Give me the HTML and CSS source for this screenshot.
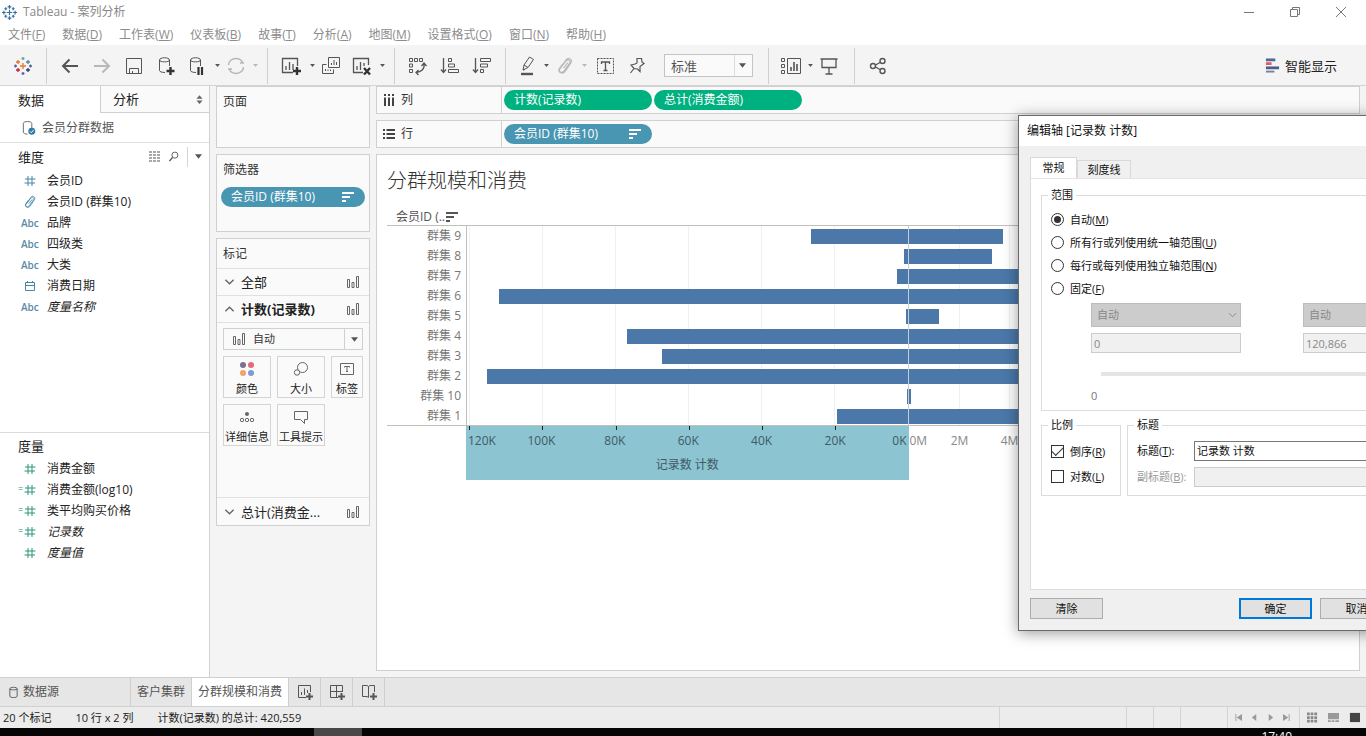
FILE: index.html
```html
<!DOCTYPE html>
<html lang="zh-CN">
<head>
<meta charset="utf-8">
<title>Tableau - 案列分析</title>
<link rel="stylesheet" href="styles.css">
</head>
<body>
<svg class="defs" aria-hidden="true">
  <symbol id="hash" viewBox="0 0 12 12"><path d="M4 1v10M8 1v10M1 4h10.500M.5 8H11"/></symbol>
  <symbol id="clip" viewBox="0 0 14 16"><path d="M3.500 9 8 3.500c2-2 4.500 0 3 2.200L6 12.500c-2 2.300-5 .5-3.500-2L8 2.500c2-2.500 6-.5 4.200 2.700L7 13c-2 2.500-6.500 1-5.200-2.500L5 6M5.500 10l4-5"/></symbol>
  <symbol id="sort" viewBox="0 0 12 12"><path d="M0 2h12M0 6h8M0 10h4" stroke-width="2"/></symbol>
  <symbol id="bars" viewBox="0 0 14 14"><path d="M1.500 4.500h2v8h-2zM6 7.500h2v5H6zM10.500 1.500h2v11h-2z"/></symbol>
  <symbol id="caret" viewBox="0 0 8 5"><path d="M0 0h8L4 5z" fill="currentColor" stroke="none"/></symbol>
  <symbol id="down" viewBox="0 0 12 8"><path d="m1.500 1.500 4.500 4.500 4.500-4.500" stroke-width="1.500"/></symbol>
  <symbol id="up" viewBox="0 0 12 8"><path d="m1.500 6.500 4.500-4.500 4.500 4.500" stroke-width="1.500"/></symbol>
  <symbol id="cyl" viewBox="0 0 20 20"><path d="M9 16.500c-3.500 0-5.500-1-5.500-2V4c0-3 10-3 10 0v6M3.500 4c0 2.500 10 2.500 10 0"/></symbol>
</svg>

<header class="titlebar">
  <svg class="applogo" viewBox="0 0 16 16"><g stroke="#38709c" stroke-width="1.300"><path d="M8 5v6M5 8h6M8 0v4M6 2h4M8 12v4M6 14h4M2 6v4M0 8h4M14 6v4M12 8h4M4 2.500v3M2.500 4h3M12 2.500v3M10.500 4h3M4 10.500v3M2.500 12h3M12 10.500v3M10.500 12h3"/></g></svg>
  <h1>Tableau - 案列分析</h1>
  <div class="winbtns">
    <button aria-label="最小化"><svg viewBox="0 0 12 12"><path d="M1 6.500h10"/></svg></button>
    <button aria-label="还原"><svg viewBox="0 0 12 12"><path d="M1.500 3.500h7v7h-7zM3.500 3.500v-2h7v7h-2"/></svg></button>
    <button aria-label="关闭"><svg viewBox="0 0 12 12"><path d="m1 1 10 10M11 1 1 11"/></svg></button>
  </div>
</header>
<nav class="menubar">
  <a href="#">文件(<u>F</u>)</a><a href="#">数据(<u>D</u>)</a><a href="#">工作表(<u>W</u>)</a><a href="#">仪表板(<u>B</u>)</a><a href="#">故事(<u>T</u>)</a><a href="#">分析(<u>A</u>)</a><a href="#">地图(<u>M</u>)</a><a href="#">设置格式(<u>O</u>)</a><a href="#">窗口(<u>N</u>)</a><a href="#">帮助(<u>H</u>)</a>
</nav>

<div class="toolbar">
  <button class="tb home" aria-label="开始"><svg viewBox="0 0 20 20"><g stroke-width="1.300"><path stroke="#e8762c" d="M10 7v6M7 10h6M5 4v4M3 6h4"/><path stroke="#c72037" d="M5 12v4M3 14h4"/><path stroke="#59879b" d="M15 4v4M13 6h4"/><path stroke="#1f457e" d="M15 12v4M13 14h4"/><path stroke="#7199a6" d="M10 1v3M8.500 2.500h3"/><path stroke="#5b6591" d="M10 16v3M8.500 17.500h3M17.500 8.500v3M16 10h3M2.500 8.500v3M1 10h3"/></g></svg></button>
  <i class="sep"></i>
  <button class="tb" aria-label="撤销"><svg viewBox="0 0 20 20"><path stroke-width="2" d="M18 10H3M9.500 3.500 3 10l6.500 6.500"/></svg></button>
  <button class="tb off" aria-label="重做"><svg viewBox="0 0 20 20"><path stroke-width="2" d="M2 10h15M10.500 3.500 17 10l-6.500 6.500"/></svg></button>
  <button class="tb" aria-label="保存"><svg viewBox="0 0 20 20"><path d="M2.500 2.500h15v15h-15zM5.500 17v-4.500h9V17M8.500 17v-2"/></svg></button>
  <button class="tb" aria-label="新建数据源"><svg viewBox="0 0 20 20"><use href="#cyl"/><path stroke="#333" stroke-width="2.400" d="M14.500 11v8M10.500 15h8"/></svg></button>
  <button class="tb s30" aria-label="暂停自动更新"><svg viewBox="0 0 20 20"><use href="#cyl"/><path stroke="#333" stroke-width="2.200" d="M11.500 11v8M15 11v8"/></svg></button>
  <button class="drop" aria-label="更多"><svg><use href="#caret"/></svg></button>
  <button class="tb s28 off" aria-label="刷新"><svg viewBox="0 0 20 20"><path stroke-width="1.500" d="M2.500 9c0-3.500 3-6.500 7.500-6.500 3 0 5.500 1.500 6.700 4.200M17.500 11c0 3.500-3 6.500-7.500 6.500-3 0-5.500-1.500-6.700-4.200M14 7h4M2 13h4"/></svg></button>
  <button class="drop off" aria-label="更多"><svg><use href="#caret"/></svg></button>
  <i class="sep"></i>
  <button class="tb" aria-label="新建工作表"><svg viewBox="0 0 20 20"><path d="M12 16.500H1.500v-14h15V10M5 14v-4M8.500 14V6M12 14V8" stroke-width="1.300"/><path stroke="#333" stroke-width="2.400" d="M16 11v8M12 15h8"/></svg></button>
  <button class="drop" aria-label="更多"><svg><use href="#caret"/></svg></button>
  <button class="tb s28" aria-label="复制"><svg viewBox="0 0 20 20"><path d="M7.500 1.500h11v10h-11zM5.500 8.500h-4v9h11v-4M10.500 9V7M13 9V4M15.500 9V6M4.500 15v-2M7 15v-1.500M9.500 15v-1.500"/></svg></button>
  <button class="tb" aria-label="清除工作表"><svg viewBox="0 0 20 20"><path d="M12 16.500H2.500v-14h15V9M6 14v-4M9.500 14V6M13 10V7" stroke-width="1.300"/><path stroke="#333" stroke-width="2.400" d="m13 12 6 6.500M19 12l-6 6.500"/></svg></button>
  <button class="drop" aria-label="更多"><svg><use href="#caret"/></svg></button>
  <i class="sep"></i>
  <button class="tb" aria-label="交换行和列"><svg viewBox="0 0 20 20"><path d="M1.500 2.500h3v3h-3zM6.500 2.500h3v3h-3zM11.500 2.500h3v3h-3zM1.500 8h3v3h-3zM1.500 13.500h3v3h-3z"/><path stroke-width="1.300" d="M16 8c1 5-3 8-8 8.500M13.500 10 16 7l2.500 3M10.500 14 8 16.500l2.500 2.500"/></svg></button>
  <button class="tb" aria-label="升序"><svg viewBox="0 0 20 20"><path d="M3.500 2v14M1 13.500l2.500 3 2.500-3" stroke-width="1.300"/><path d="M8.500 2.500h3v3h-3zM8.500 8h6v3h-6zM8.500 13.500h10v3h-10z"/></svg></button>
  <button class="tb" aria-label="降序"><svg viewBox="0 0 20 20"><path d="M3.500 2v14M1 13.500l2.500 3 2.500-3" stroke-width="1.300"/><path d="M8.500 2.500h10v3h-10zM8.500 8h7v3h-7zM8.500 13.500h3v3h-3z"/></svg></button>
  <i class="sep"></i>
  <button class="tb s28" aria-label="突出显示"><svg viewBox="0 0 20 20"><path d="m6 14 1-5 5.500-8 4 2.500-5.500 8zM7 9l4 2.500M6 14l2-.500"/><path stroke-width="2.400" d="M4 18h12"/></svg></button>
  <button class="drop" aria-label="更多"><svg><use href="#caret"/></svg></button>
  <button class="tb s28 off" aria-label="分组成员"><svg class="mid"><use href="#clip"/></svg></button>
  <button class="drop off" aria-label="更多"><svg><use href="#caret"/></svg></button>
  <button class="tb" aria-label="显示标记标签"><svg viewBox="0 0 20 20"><path stroke-dasharray="2 1" d="M2.500 2.500h16v15h-16z"/><path stroke-width="1.300" d="M6.500 8V6h8v2M10.500 6v8.500M8.500 14.500h4"/></svg></button>
  <button class="tb" aria-label="固定轴"><svg viewBox="0 0 20 20"><path stroke-width="1.200" d="M10 2.500h4.500l.5 3.500 2 1.500-4 3v5L10.500 13 7 12.500 4 9l4-1 2-1zM7 12.500 3.500 17"/></svg></button>
  <label class="fit"><select aria-label="适合"><option>标准</option></select><svg><use href="#caret"/></svg></label>
  <i class="sep wide"></i>
  <button class="tb s28" aria-label="显示卡"><svg viewBox="0 0 20 20"><path d="M.5 2.500h3v3h-3zM.5 8.500h3v3h-3zM.5 14.500h3v3h-3zM6.500 2.500h13v15h-13z"/><path stroke-width="1.600" d="M10 15v-4M13 15V6M16 15V8"/></svg></button>
  <button class="drop" aria-label="更多"><svg><use href="#caret"/></svg></button>
  <button class="tb s28" aria-label="演示模式"><svg viewBox="0 0 20 20"><path stroke-width="1.300" d="M1.500 3h17M3 3v8.500h14V3M10 11.500V18M6.500 18h7"/></svg></button>
  <i class="sep share"></i>
  <button class="tb" aria-label="共享"><svg viewBox="0 0 20 20"><g stroke-width="1.400"><circle cx="5" cy="10" r="2.500"/><circle cx="14.500" cy="5" r="2.500"/><circle cx="14.500" cy="15" r="2.500"/><path d="m7.500 9 4.500-2.500M7.500 11l4.500 2.500"/></g></svg></button>
  <button class="showme"><svg viewBox="0 0 16 16"><path stroke="#4e6a9c" stroke-width="3" d="M1 2h10"/><path stroke="#e35b5b" stroke-width="3" d="M1 6h6"/><path stroke="#4b5f8c" stroke-width="3" d="M1 10.500h14"/><path stroke="#7a7f9c" stroke-width="2" d="M1 14.500h9"/></svg>智能显示</button>
</div>

<main class="work">
  <aside class="data">
    <div class="datatabs"><button class="on">数据</button><button>分析<svg viewBox="0 0 8 10"><path fill="#666" stroke="none" d="m4 0 3.500 4h-7zM.5 6h7L4 10z"/></svg></button></div>
    <a class="source" href="#"><svg viewBox="0 0 16 16"><path stroke="#666" d="M7 14.500c-3 0-4.500-1-4.500-2V3c0-2.500 9-2.500 9 0v5"/><circle cx="11.500" cy="11.500" r="3.700" fill="#2f7cab" stroke="none"/><path stroke="#fff" d="m9.500 11.500 1.500 1.500 2.500-3"/></svg>会员分群数据</a>
    <section class="fields dims">
      <h2>维度<span class="tools"><svg viewBox="0 0 12 10"><path stroke="#555" stroke-dasharray="3 1" d="M0 .5h12M0 3.500h12M0 6.500h12M0 9.500h12"/></svg><svg viewBox="0 0 12 12"><circle cx="7" cy="4.500" r="3.300" stroke="#555"/><path stroke="#555" stroke-width="1.500" d="M4.500 7 1 11"/></svg><i></i><svg class="car"><use href="#caret"/></svg></span></h2>
      <ul>
        <li><svg><use href="#hash"/></svg>会员ID</li>
        <li><svg class="pin"><use href="#clip"/></svg>会员ID (群集10)</li>
        <li><b>Abc</b>品牌</li>
        <li><b>Abc</b>四级类</li>
        <li><b>Abc</b>大类</li>
        <li><svg viewBox="0 0 12 12"><path d="M1.500 2.500h9v8h-9zM1.500 5.500h9M3.500 1v1.500M8.500 1v1.500"/></svg>消费日期</li>
        <li><b>Abc</b><em>度量名称</em></li>
      </ul>
    </section>
    <section class="fields meas">
      <h2>度量</h2>
      <ul>
        <li><svg><use href="#hash"/></svg>消费金额</li>
        <li class="calc"><svg><use href="#hash"/></svg>消费金额(log10)</li>
        <li class="calc"><svg><use href="#hash"/></svg>类平均购买价格</li>
        <li class="calc"><svg><use href="#hash"/></svg><em>记录数</em></li>
        <li><svg><use href="#hash"/></svg><em>度量值</em></li>
      </ul>
    </section>
  </aside>

  <div class="cards">
    <section class="card pages"><h2>页面</h2></section>
    <section class="card filters"><h2>筛选器</h2><button class="pill blue">会员ID (群集10)<svg><use href="#sort"/></svg></button></section>
    <section class="card marks">
      <h2>标记</h2>
      <button class="mrow"><svg class="chev"><use href="#down"/></svg>全部<svg class="bi"><use href="#bars"/></svg></button>
      <button class="mrow cur"><svg class="chev"><use href="#up"/></svg>计数(记录数)<svg class="bi"><use href="#bars"/></svg></button>
      <div class="mbody">
        <label class="mtype"><svg class="bi"><use href="#bars"/></svg><select aria-label="标记类型"><option>自动</option></select><span><svg class="car"><use href="#caret"/></svg></span></label>
        <div class="mgrid">
          <button><svg viewBox="0 0 16 16"><g stroke="none"><circle cx="4" cy="4" r="3" fill="#77738f"/><circle cx="12" cy="4" r="3" fill="#e5687f"/><circle cx="4" cy="12" r="3" fill="#eda36f"/><circle cx="12" cy="12" r="3" fill="#7d9bd0"/></g></svg>颜色</button>
          <button><svg viewBox="0 0 16 16"><circle cx="9.500" cy="6.500" r="5"/><circle cx="4" cy="11.500" r="2.700" fill="#fafafa"/></svg>大小</button>
          <button><svg viewBox="0 0 16 16"><path d="M1.500 2.500h13v11h-13zM5.500 6.500V5.500h5v1M8 5.500v5M7 10.500h2"/></svg>标签</button>
          <button><svg viewBox="0 0 16 16"><circle cx="8" cy="5" r="2" fill="#666" stroke="none"/><circle cx="3" cy="11" r="1.700"/><circle cx="8" cy="11" r="1.700"/><circle cx="13" cy="11" r="1.700"/></svg>详细信息</button>
          <button><svg viewBox="0 0 16 16"><path d="M1.500 2.500h13v8h-3v4l-4-4h-6z"/></svg>工具提示</button>
        </div>
      </div>
      <button class="mrow last"><svg class="chev"><use href="#down"/></svg>总计(消费金...<svg class="bi"><use href="#bars"/></svg></button>
    </section>
  </div>

  <div class="sheet">
    <div class="shelf"><h2><svg viewBox="0 0 12 12"><path stroke="#444" stroke-width="2" d="M2 0v2M6 0v2M10 0v2M2 3.500V12M6 3.500V12M10 3.500V12"/></svg>列</h2><button class="pill green">计数(记录数)</button><button class="pill green">总计(消费金额)</button></div>
    <div class="shelf"><h2><svg viewBox="0 0 12 12"><path stroke="#444" stroke-width="2" d="M0 2h2M0 6h2M0 10h2M3.500 2H12M3.500 6H12M3.500 10H12"/></svg>行</h2><button class="pill blue">会员ID (群集10)<svg><use href="#sort"/></svg></button></div>
    <section class="view">
      <h2>分群规模和消费</h2>
      <div class="chart">
        <div class="rowhead">会员ID (..<svg><use href="#sort"/></svg></div>
        <div class="labels"><span>群集 9</span><span>群集 8</span><span>群集 7</span><span>群集 6</span><span>群集 5</span><span>群集 4</span><span>群集 3</span><span>群集 2</span><span>群集 10</span><span>群集 1</span></div>
        <div class="pane left">
          <div class="lines"><i></i><i></i><i></i><i></i><i></i><i></i></div>
          <div class="bar" style="width:21.9%"></div><div class="bar" style="width:.8%"></div><div class="bar" style="width:2.500%"></div><div class="bar" style="width:92.700%"></div><div class="bar" style="width:.3%"></div><div class="bar" style="width:63.600%"></div><div class="bar" style="width:55.700%"></div><div class="bar" style="width:95.400%"></div><div class="bar" style="width:.01%"></div><div class="bar" style="width:15.900%"></div>
        </div>
        <div class="pane right">
          <div class="lines"><i></i><i></i><i></i><i></i><i></i><i></i><i></i><i></i><i></i></div>
          <div class="bar" style="width:21.300%"></div><div class="bar" style="width:18.900%"></div><div class="bar" style="width:60%"></div><div class="bar" style="width:85%"></div><div class="bar" style="width:6.800%"></div><div class="bar" style="width:80%"></div><div class="bar" style="width:76%"></div><div class="bar" style="width:95%"></div><div class="bar" style="width:.5%"></div><div class="bar" style="width:50%"></div>
        </div>
        <div class="axis left picked">
          <div class="lines"><i></i><i></i><i></i><i></i><i></i><i></i></div>
          <div class="ticks"><span>120K</span><span>100K</span><span>80K</span><span>60K</span><span>40K</span><span>20K</span><span>0K</span></div>
          <div class="axname">记录数 计数</div>
        </div>
        <div class="axis right"><div class="ticks"><span>0M</span><span>2M</span><span>4M</span></div></div>
      </div>
    </section>
  </div>
</main>

<div class="sheettabs">
  <button class="src"><svg viewBox="0 0 12 14"><path d="M2 3v8c0 2 8 2 8 0V3c0-2.200-8-2.200-8 0zc0 1.500 8 1.500 8 0"/></svg>数据源</button>
  <button>客户集群</button>
  <button class="on">分群规模和消费</button>
  <button class="new" aria-label="新建工作表"><svg viewBox="0 0 18 18"><path d="M10 14.500H2.500v-12h12V9M5.500 12V9M8.500 12V5.500M11.500 10V7"/><path stroke-width="2" d="M13.500 10v7M10 13.500h7"/></svg></button>
  <button class="new" aria-label="新建仪表板"><svg viewBox="0 0 18 18"><path d="M10 14.500H2.500v-12h12V9M2.500 8.500h12M8.500 2.500v12"/><path stroke-width="2" d="M13.500 10v7M10 13.500h7"/></svg></button>
  <button class="new" aria-label="新建故事"><svg viewBox="0 0 18 18"><path d="M8.500 14.500 7 13.500H2.500v-11H7l1.500 1 1.500-1h4.500V9M8.500 3.500v11"/><path stroke-width="2" d="M13.500 10v7M10 13.500h7"/></svg></button>
</div>
<footer class="status">
  <span>20 个标记</span><span>10 行 x 2 列</span><span>计数(记录数) 的总计: 420,559</span>
  <div class="cells"><i class="c127"></i><i class="c27"></i><i class="c27"></i><i class="c47"></i>
    <div class="nav"><svg viewBox="0 0 8 8"><path d="M1 0v8"/><path class="f" d="M8 0v8L2 4z"/></svg><svg viewBox="0 0 8 8"><path class="f" d="M6 0v8L1 4z"/></svg><svg viewBox="0 0 8 8"><path class="f" d="M2 0v8l5-4z"/></svg><svg viewBox="0 0 8 8"><path d="M7 0v8"/><path class="f" d="M0 0v8l6-4z"/></svg></div>
    <div class="modes"><svg viewBox="0 0 12 12"><path stroke="#888" stroke-width="3" stroke-dasharray="3 1" d="M0 2h12M0 6h12M0 10h12"/></svg><svg viewBox="0 0 12 12"><path fill="#999" stroke="none" d="M0 1h12v7H0zM0 9h3v2H0zM4 9h3v2H4zM8 9h4v2H8z"/></svg><svg viewBox="0 0 12 12"><path fill="#444" stroke="none" d="M1 1h11v10H1z"/></svg></div>
  </div>
</footer>
<div class="taskbar"><i></i><time>17:40</time></div>

<div class="overlay">
<div class="dialog" role="dialog" aria-label="编辑轴">
  <h2>编辑轴 [记录数 计数]</h2>
  <div class="dbody">
    <div class="dtabs"><button class="on">常规</button><button>刻度线</button></div>
    <form class="page">
      <fieldset class="range"><legend>范围</legend>
        <label><input type="radio" name="r" checked>自动(<u>M</u>)</label>
        <label><input type="radio" name="r">所有行或列使用统一轴范围(<u>U</u>)</label>
        <label><input type="radio" name="r">每行或每列使用独立轴范围(<u>N</u>)</label>
        <label><input type="radio" name="r">固定(<u>F</u>)</label>
        <div class="limits">
          <div class="selwrap"><select disabled aria-label="起始"><option>自动</option></select><svg viewBox="0 0 10 6"><path d="m1 1 4 4 4-4" stroke="#888"/></svg></div>
          <div class="selwrap"><select disabled aria-label="结束"><option>自动</option></select></div>
          <input type="text" disabled value="0" aria-label="起始值"><input type="text" disabled value="120,866" aria-label="结束值">
        </div>
        <div class="track"></div>
        <span class="zero">0</span>
      </fieldset>
      <div class="two">
        <fieldset class="scale"><legend>比例</legend>
          <label><input type="checkbox" checked>倒序(<u>R</u>)</label>
          <label><input type="checkbox">对数(<u>L</u>)</label>
        </fieldset>
        <fieldset><legend>标题</legend>
          <div class="names">
            <label for="t1">标题(<u>T</u>):</label><input id="t1" type="text" value="记录数 计数">
            <label for="t2" class="dis">副标题(<u>B</u>):</label><input id="t2" type="text" disabled>
          </div>
        </fieldset>
      </div>
    </form>
    <div class="dfoot"><button>清除</button><button class="ok">确定</button><button>取消</button></div>
  </div>
</div>
</div>
</body>
</html>
```

FILE: styles.css
```css
* { box-sizing: border-box; }
html, body { height: 100%; margin: 0; overflow: hidden; }
body { display: flex; flex-direction: column; position: relative; background: #f4f4f4; color: #333; font: 12px/16px "Open Sans", "Noto Sans CJK SC", sans-serif; }
button, input, select { font: inherit; color: inherit; margin: 0; border-radius: 0; }
button { background: none; border: 0; padding: 0; }
h1, h2, ul, fieldset, legend { margin: 0; padding: 0; font-size: inherit; font-weight: 400; }
a { color: inherit; text-decoration: none; }
ul { list-style: none; }
svg { fill: none; stroke: currentColor; flex: none; display: block; }
select { appearance: none; }
.defs { display: none; }

.titlebar { display: flex; align-items: center; height: 24px; flex: none; background: #fff; color: #888; padding-left: 2px; }
.applogo { width: 15px; height: 15px; margin-right: 6px; }
.titlebar h1 { flex: 1; }
.winbtns { display: flex; padding-right: 2px; }
.winbtns button { width: 46px; height: 20px; display: grid; place-items: center; color: #777; }
.winbtns svg { width: 12px; height: 12px; }
.menubar { display: flex; align-items: center; gap: 17px; height: 21px; flex: none; padding: 0 8px; background: #fff; color: #8c8c8c; }

.toolbar { display: flex; align-items: center; height: 41px; flex: none; padding-top: 1px; color: #555; border-bottom: 1px solid #d4d4d4; }
.tb { width: 32px; height: 32px; display: grid; place-items: center; flex: none; }
.tb svg { width: 20px; height: 20px; }
.tb .mid { width: 16px; height: 18px; }
.tb.home { width: 39px; padding-left: 6px; }
.s28 { width: 28px; }
.s30 { width: 30px; }
.off { color: #b8b8b8; }
.drop { width: 10px; height: 32px; display: grid; place-items: center; flex: none; }
.drop svg { width: 5px; height: 3px; }
.sep { width: 1px; height: 36px; background: #d0d0d0; margin: 0 7px; flex: none; }
.sep.wide { margin: 0 8px 0 15px; }
.sep.share { margin: 0 7px 0 11px; }
.fit { position: relative; margin-left: 11px; width: 89px; flex: none; }
.fit select { width: 100%; height: 23px; border: 1px solid #c4c4c4; background: #fafafa; padding: 0 6px; font-size: 13px; line-height: 20px; }
.fit svg { position: absolute; right: 7px; top: 9px; width: 7px; height: 5px; }
.fit::after { content: ""; position: absolute; right: 18px; top: 1px; width: 1px; height: 21px; background: #ddd; }
.showme { display: flex; align-items: center; gap: 5px; margin-left: auto; padding-right: 29px; font-size: 13px; color: #222; }
.showme svg { width: 15px; height: 15px; }

.work { flex: 1; min-height: 0; display: grid; grid-template-columns: 210px 154px minmax(0, 1fr); gap: 6px; padding-right: 6px; }
.data { display: flex; flex-direction: column; background: #fff; border-right: 1px solid #d0d0d0; color: #222; min-height: 0; }
.datatabs { display: grid; grid-template-columns: 100px 1fr; height: 27px; font-size: 13px; }
.datatabs button { display: flex; align-items: center; justify-content: space-between; padding: 0 6px 0 12px; background: #fafafa; border: solid #d0d0d0; border-width: 0 0 1px 1px; }
.datatabs .on { background: #fff; border: 0; padding-left: 18px; }
.datatabs svg { width: 7px; height: 9px; }
.source { display: flex; align-items: center; gap: 6px; height: 30px; padding-left: 21px; border-bottom: 1px solid #e0e0e0; color: #555; }
.source svg { width: 15px; height: 16px; }
.fields.dims { flex: 290 1 0; }
.fields.meas { flex: 244 1 0; border-top: 1px solid #dcdcdc; }
.fields h2 { display: flex; align-items: center; justify-content: space-between; height: 27px; padding: 0 7px 0 18px; font-size: 13px; line-height: 24px; }
.meas h2 { height: 25px; }
.tools { display: flex; align-items: center; gap: 7px; }
.tools svg { width: 12px; height: 11px; }
.tools i { width: 1px; height: 20px; background: #d4d4d4; }
.tools svg.car, .car { width: 7px; height: 5px; color: #555; }
.fields li { display: grid; grid-template-columns: 17px 1fr; align-items: center; column-gap: 9px; height: 21px; padding-left: 21px; position: relative; line-height: 20px; }
.fields li svg { width: 12px; height: 12px; color: #4586a5; justify-self: center; }
.fields li .pin { height: 14px; }
.fields li b { font-weight: 600; font-size: 10px; color: #5b8aa6; }
.fields.meas li svg { color: #2b9678; }
.calc::before { content: "="; position: absolute; left: 18px; top: 0; font-size: 9px; color: #2b9678; }

.cards { display: flex; flex-direction: column; gap: 6px; }
.card { background: #fafafa; border: 1px solid #d0d0d0; }
.card h2 { padding: 7px 6px 0; }
.pages { height: 62px; }
.filters { height: 78px; padding: 0 4px; }
.filters h2 { padding: 7px 2px 9px; }
.marks { height: 288px; display: flex; flex-direction: column; }
.marks h2 { height: 29px; }
.pill { display: flex; align-items: center; justify-content: space-between; width: 148px; height: 20px; border-radius: 10px; padding: 0 11px 0 10px; color: #fff; flex: none; }
.filters .pill { width: 100%; }
.pill svg { width: 12px; height: 12px; }
.blue { background: #4996b2; }
.green { background: #00b180; }
.mrow { display: flex; align-items: center; height: 27px; padding: 0 9px 0 7px; border-top: 1px solid #e0e0e0; font-size: 13px; color: #222; flex: none; }
.chev { width: 11px; height: 8px; margin-right: 6px; color: #666; }
.bi { width: 14px; height: 14px; margin-left: auto; color: #666; }
.cur { font-weight: 700; }
.mbody { flex: 1; border-top: 1px solid #e0e0e0; padding: 5px 6px; font-size: 11px; }
.mtype { display: block; position: relative; }
.mtype select { display: block; width: 100%; height: 22px; border: 1px solid #d0d0d0; background: #fafafa; padding: 0 0 0 29px; line-height: 18px; }
.mtype .bi { position: absolute; left: 9px; top: 4px; }
.mtype span { position: absolute; right: 0; top: 0; width: 19px; height: 22px; border-left: 1px solid #d0d0d0; display: grid; place-items: center; }
.mgrid { display: grid; grid-template-columns: 48px 48px 32px; grid-auto-rows: 42px; gap: 6px; padding-top: 6px; }
.mgrid button { border: 1px solid #d4d4d4; display: flex; flex-direction: column; align-items: center; justify-content: space-between; padding: 4px 0 0; color: #222; white-space: nowrap; }
.mgrid svg { width: 16px; height: 16px; color: #666; }
.last { height: 28px; }

.sheet { display: flex; flex-direction: column; gap: 6px; padding-bottom: 6px; min-height: 0; min-width: 0; }
.shelf { display: flex; align-items: center; gap: 2px; height: 28px; flex: none; background: #fafafa; border: 1px solid #d0d0d0; }
.shelf h2 { display: flex; align-items: center; gap: 6px; width: 125px; height: 100%; padding-left: 6px; border-right: 1px solid #d0d0d0; }
.shelf h2 svg { width: 12px; height: 12px; }
.view { flex: 1; background: #fff; border: 1px solid #d0d0d0; padding: 12px 9px 0 10px; }
.view h2 { font-size: 20px; line-height: 28px; font-weight: 300; color: #333; }
.chart { display: grid; grid-template-columns: 80px 1fr 1fr; grid-template-rows: 31px 200px 54px; color: #666; }
.rowhead { grid-column: 1 / 4; display: flex; align-items: flex-end; gap: 1px; padding: 0 0 0 9px; border-bottom: 1px solid #c0c0b8; color: #555; white-space: nowrap; }
.rowhead svg { width: 12px; height: 12px; margin-bottom: 2px; }
.labels { display: grid; grid-auto-rows: 20px; line-height: 20px; text-align: right; padding-right: 5px; border-right: 1px solid #c0c0c0; border-bottom: 1px solid #c0c0b8; color: #777; }
.pane { position: relative; display: grid; grid-auto-rows: 20px; align-items: center; border-bottom: 1px solid #c0c0b8; }
.pane.left { justify-items: end; border-right: 1px solid #c4ced8; }
.lines { position: absolute; inset: 0 0 0 2px; display: grid; grid-template-columns: repeat(6, 1fr); }
.right .lines { left: 0; grid-template-columns: repeat(9, 50px); overflow: hidden; }
.lines i { border-left: 1px solid #f0f0f0; }
.right .lines i:first-child { border: 0; }
.bar { height: 15px; background: #4b78a8; position: relative; }
.axis { position: relative; grid-row: 3; padding-top: 6px; }
.axis.left { grid-column: 2; margin-left: -1px; }
.axis.right { grid-column: 3; color: #888; }
.picked { background: #8cc4d2; color: #3f5a62; }
.picked .lines { left: 3px; height: 4px; }
.picked .lines i { border-color: #222; }
.ticks { display: grid; grid-template-columns: 1fr repeat(5, 2fr) 1fr; padding-left: 2px; text-align: center; line-height: 18px; }
.ticks span { min-width: 0; }
.ticks span:first-child { text-align: left; }
.picked .ticks span:last-child { text-align: right; padding-right: 2px; }
.right .ticks { grid-template-columns: 25px repeat(2, 50px); padding-left: 1px; }
.axname { text-align: center; padding-top: 6px; line-height: 17px; }

.sheettabs { display: flex; height: 30px; flex: none; background: #e6e6e6; border-top: 1px solid #d0d0d0; border-bottom: 1px solid #d0d0d0; color: #555; }
.sheettabs button { padding: 0 6px; border-right: 1px solid #cfcfcf; white-space: nowrap; }
.sheettabs .src { display: flex; align-items: center; gap: 4px; width: 131px; padding-left: 8px; }
.src svg { width: 11px; height: 13px; }
.sheettabs .on { background: #fff; }
.sheettabs .new { width: 32px; padding: 0 7px; }
.new svg { width: 18px; height: 18px; }
.status { display: flex; align-items: center; gap: 24px; height: 21px; flex: none; padding-left: 3px; background: #ececec; font-size: 11px; color: #222; }
.cells { display: flex; margin-left: auto; height: 100%; color: #999; border-left: 1px solid #d4d4d4; }
.cells > i, .nav { border-right: 1px solid #d4d4d4; }
.c127 { width: 127px; }
.c27 { width: 27px; }
.c47 { width: 47px; }
.nav { display: flex; align-items: center; gap: 9px; padding: 0 7px; width: 72px; }
.nav svg { width: 7px; height: 7px; }
.nav .f { fill: currentColor; stroke: none; }
.modes { display: flex; align-items: center; gap: 10px; padding: 0 6px 0 7px; }
.modes svg { width: 11px; height: 11px; }
.taskbar { height: 8px; flex: none; background: #050505; overflow: hidden; color: #fff; display: flex; }
.taskbar i { width: 48px; margin-left: 314px; background: #484848; }
.taskbar time { margin-left: auto; padding: 1px 74px 0 0; }

.overlay { position: absolute; inset: 0; overflow: hidden; pointer-events: none; }
.dialog { position: absolute; left: 1018px; top: 115px; width: 464px; pointer-events: auto; background: #f0f0f0; border: 1px solid #6a6a6a; box-shadow: 0 2px 14px rgba(0, 0, 0, .4); color: #111; font-size: 11px; }
.dialog h2 { height: 30px; line-height: 30px; padding-left: 8px; background: #fff; font-size: 12px; }
.dbody { padding: 11px 12px 11px 11px; }
.dtabs { display: flex; align-items: flex-end; height: 21px; }
.dtabs button { height: 18px; width: 54px; border: 1px solid #d9d9d9; border-bottom: 0; }
.dtabs .on { height: 21px; width: 47px; background: #fff; }
.page { display: block; height: 412px; background: #fff; border: 1px solid #dcdcdc; border-top-color: #e4e4e4; padding: 9px 10px; }
fieldset { border: 1px solid #dcdcdc; min-width: 0; }
legend { margin-left: 6px; padding: 0 3px; line-height: 14px; }
.range { height: 223px; }
.range label, .scale label { display: flex; align-items: center; height: 23px; padding-left: 9px; line-height: 20px; white-space: nowrap; }
.range legend + label { margin-top: 6px; }
input[type=radio], input[type=checkbox] { appearance: none; width: 13px; height: 13px; border: 1px solid #333; background: #fff; margin-right: 6px; flex: none; display: grid; place-items: center; }
input[type=radio] { border-radius: 50%; }
input[type=radio]:checked::before { content: ""; width: 7px; height: 7px; border-radius: 50%; background: #333; }
input[type=checkbox]:checked::before { content: ""; width: 10px; height: 5px; border: solid #333; border-width: 0 0 1px 1px; transform: rotate(-45deg); margin-bottom: 3px; }
.limits { display: grid; grid-template-columns: 150px 150px; gap: 6px 62px; padding: 3px 0 0 49px; color: #888; }
.selwrap { position: relative; }
.selwrap select { display: block; width: 100%; height: 24px; background: #ccc; border: 1px solid #bcbcbc; padding: 0 5px; opacity: 1; color: #888; }
.selwrap svg { position: absolute; right: 4px; top: 9px; width: 9px; height: 6px; }
input[type=text] { width: 100%; height: 20px; padding: 0 2px; border: 1px solid #777; background: #fff; }
input[type=text]:disabled { border-color: #ccc; background: #f0f0f0; color: #888; }
.track { margin: 19px 0 0 59px; height: 4px; background: #e5e5e5; }
.zero { display: block; padding: 12px 0 0 49px; color: #777; }
.two { display: grid; grid-template-columns: 80px 1fr; gap: 6px; margin-top: 7px; }
.two fieldset { height: 78px; }
.scale label { height: 25px; }
.scale legend + label { margin-top: 7px; }
.names { display: grid; grid-template-columns: 57px 1fr; gap: 6px 0; padding: 9px 0 0 9px; align-items: center; line-height: 20px; }
.dis { color: #999; }
.dfoot { display: flex; gap: 8px; padding: 8px 76px 0 0; }
.dfoot button { width: 73px; height: 21px; background: #e1e1e1; border: 1px solid #adadad; }
.dfoot button:first-child { margin-right: auto; }
.dfoot .ok { border: 2px solid #0078d7; }
```
